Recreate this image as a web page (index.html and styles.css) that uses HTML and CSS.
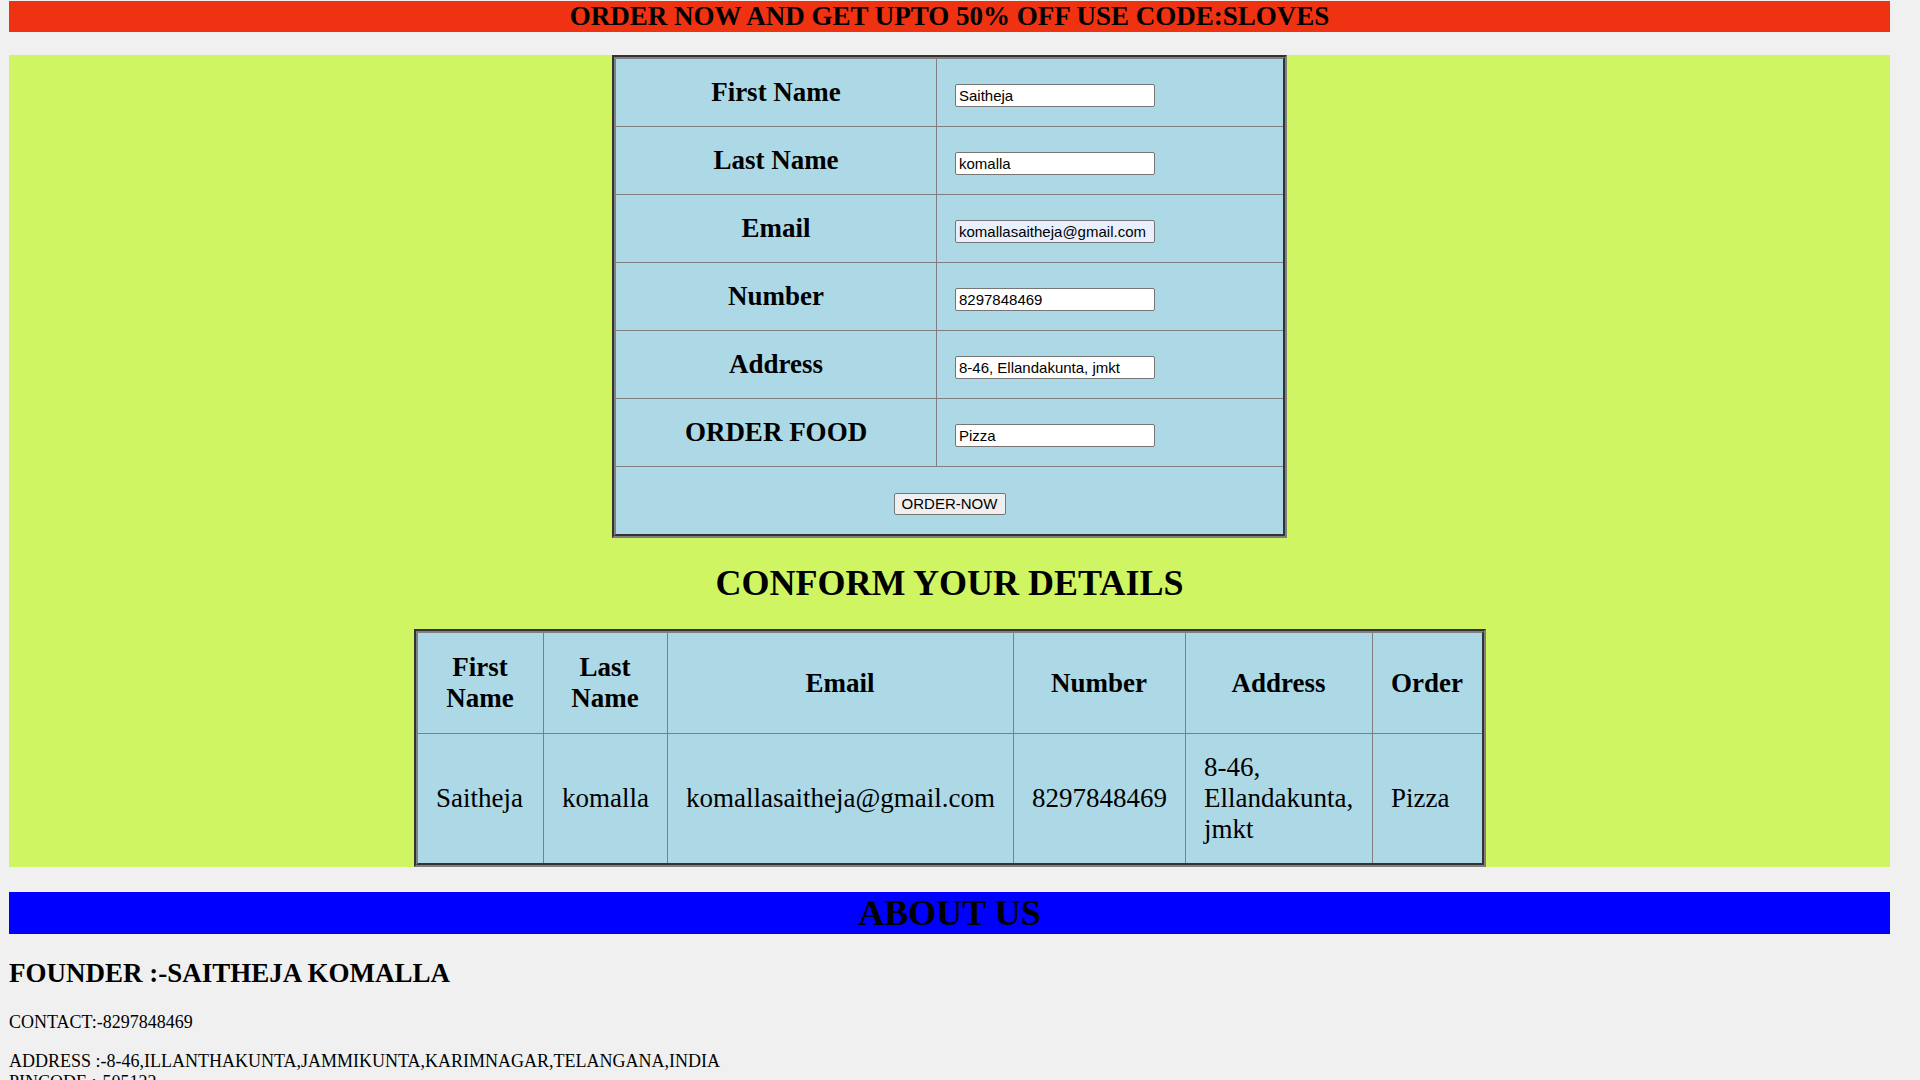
FILE: index.html
```html
<!DOCTYPE html>
<html lang="en">
<head>
<meta charset="utf-8">
<title>Order Food</title>
<link rel="stylesheet" href="styles.css">
</head>
<body>
<div class="page">
  <h2 class="offer">ORDER NOW AND GET UPTO 50% OFF USE CODE:SLOVES</h2>

  <section class="order">
    <div class="frame">
      <table class="grid form-table">
        <tr><th class="label">First Name</th><td class="field"><input type="text" value="Saitheja"></td></tr>
        <tr><th class="label">Last Name</th><td class="field"><input type="text" value="komalla"></td></tr>
        <tr><th class="label">Email</th><td class="field"><input type="email" class="autofill" value="komallasaitheja@gmail.com"></td></tr>
        <tr><th class="label">Number</th><td class="field"><input type="text" value="8297848469"></td></tr>
        <tr><th class="label">Address</th><td class="field"><input type="text" value="8-46, Ellandakunta, jmkt"></td></tr>
        <tr><th class="label">ORDER FOOD</th><td class="field"><input type="text" value="Pizza"></td></tr>
        <tr><td class="submit" colspan="2"><button type="button">ORDER-NOW</button></td></tr>
      </table>
    </div>

    <h1 class="confirm-title">CONFORM YOUR DETAILS</h1>

    <div class="frame">
      <table class="grid details-table">
        <tr>
          <th class="c1">First Name</th>
          <th class="c2">Last Name</th>
          <th class="c3">Email</th>
          <th class="c4">Number</th>
          <th class="c5">Address</th>
          <th class="c6">Order</th>
        </tr>
        <tr>
          <td>Saitheja</td>
          <td>komalla</td>
          <td>komallasaitheja@gmail.com</td>
          <td>8297848469</td>
          <td>8-46, Ellandakunta, jmkt</td>
          <td>Pizza</td>
        </tr>
      </table>
    </div>
  </section>

  <h1 class="about">ABOUT US</h1>
  <h2 class="founder">FOUNDER :-SAITHEJA KOMALLA</h2>
  <p class="info">CONTACT:-8297848469</p>
  <p class="info">ADDRESS :-8-46,ILLANTHAKUNTA,JAMMIKUNTA,KARIMNAGAR,TELANGANA,INDIA<br>PINCODE :-505122</p>
</div>
</body>
</html>
```

FILE: styles.css
```css
html, body {
  margin: 0;
  background: #f0f0f0;
}

body {
  font-family: "Liberation Serif", "Times New Roman", serif;
  color: #000;
}

.page {
  width: 1881px;
  margin-left: 9px;
  padding-top: 1px;
}

.offer {
  margin: 0;
  height: 31px;
  line-height: 31px;
  background: #ef3312;
  font-size: 27px;
  font-weight: bold;
  text-align: center;
}

.order {
  margin-top: 23px;
  background: #cff562;
}

.frame {
  width: fit-content;
  margin: 0 auto;
  border: 2px solid;
  border-color: #333333 #808080 #808080 #333333;
}

.grid {
  border: 2px solid;
  border-color: #808080 #333333 #333333 #808080;
  border-collapse: separate;
  border-spacing: 0;
  table-layout: fixed;
  background: #add8e6;
  font-size: 27px;
  line-height: 31px;
}

.grid tr > * + * {
  border-left: 1px solid #808080;
}

.grid tr + tr > * {
  border-top: 1px solid #808080;
}

.grid th,
.grid td {
  box-sizing: border-box;
  vertical-align: middle;
}

.form-table {
  width: 671px;
}

.form-table .label {
  width: 320px;
  padding: 18px 18.5px;
  text-align: center;
  font-weight: bold;
}

.form-table .field {
  width: 347px;
  padding: 18px 18px;
  text-align: left;
}

.form-table input {
  box-sizing: border-box;
  width: 200px;
  height: 23px;
  margin: 0;
  padding: 1px 3px;
  border: 1px solid #767676;
  border-radius: 2px;
  background: #ffffff;
  font-family: "Liberation Sans", Arial, sans-serif;
  font-size: 15px;
  color: #000;
}

.form-table input.autofill {
  background: #e8f0fe;
}

.form-table .submit {
  padding: 18px;
  text-align: center;
}

.form-table button {
  box-sizing: border-box;
  width: 112px;
  height: 22px;
  margin: 0;
  padding: 0;
  border: 1px solid #767676;
  border-radius: 2px;
  background: #efefef;
  font-family: "Liberation Sans", Arial, sans-serif;
  font-size: 15px;
  color: #000;
}

.confirm-title {
  margin: 25px 0;
  height: 41px;
  line-height: 41px;
  font-size: 36px;
  font-weight: bold;
  text-align: center;
}

.details-table {
  width: 1068px;
}

.details-table th {
  padding: 19px 18.5px;
  font-weight: bold;
  text-align: center;
}

.details-table td {
  padding: 18px 18.5px;
  text-align: left;
}

.details-table .c1 { width: 125px; }
.details-table .c2 { width: 124px; }
.details-table .c3 { width: 346px; }
.details-table .c4 { width: 172px; }
.details-table .c5 { width: 187px; }
.details-table .c6 { width: 110px; }

.about {
  margin: 25px 0 0;
  height: 42px;
  line-height: 42px;
  background: #0000ff;
  font-size: 36px;
  font-weight: bold;
  text-align: center;
}

.founder {
  margin: 23.6px 0 23px;
  font-size: 27px;
  font-weight: bold;
}

.info {
  margin: 18.5px 0;
  font-size: 18px;
}
```
